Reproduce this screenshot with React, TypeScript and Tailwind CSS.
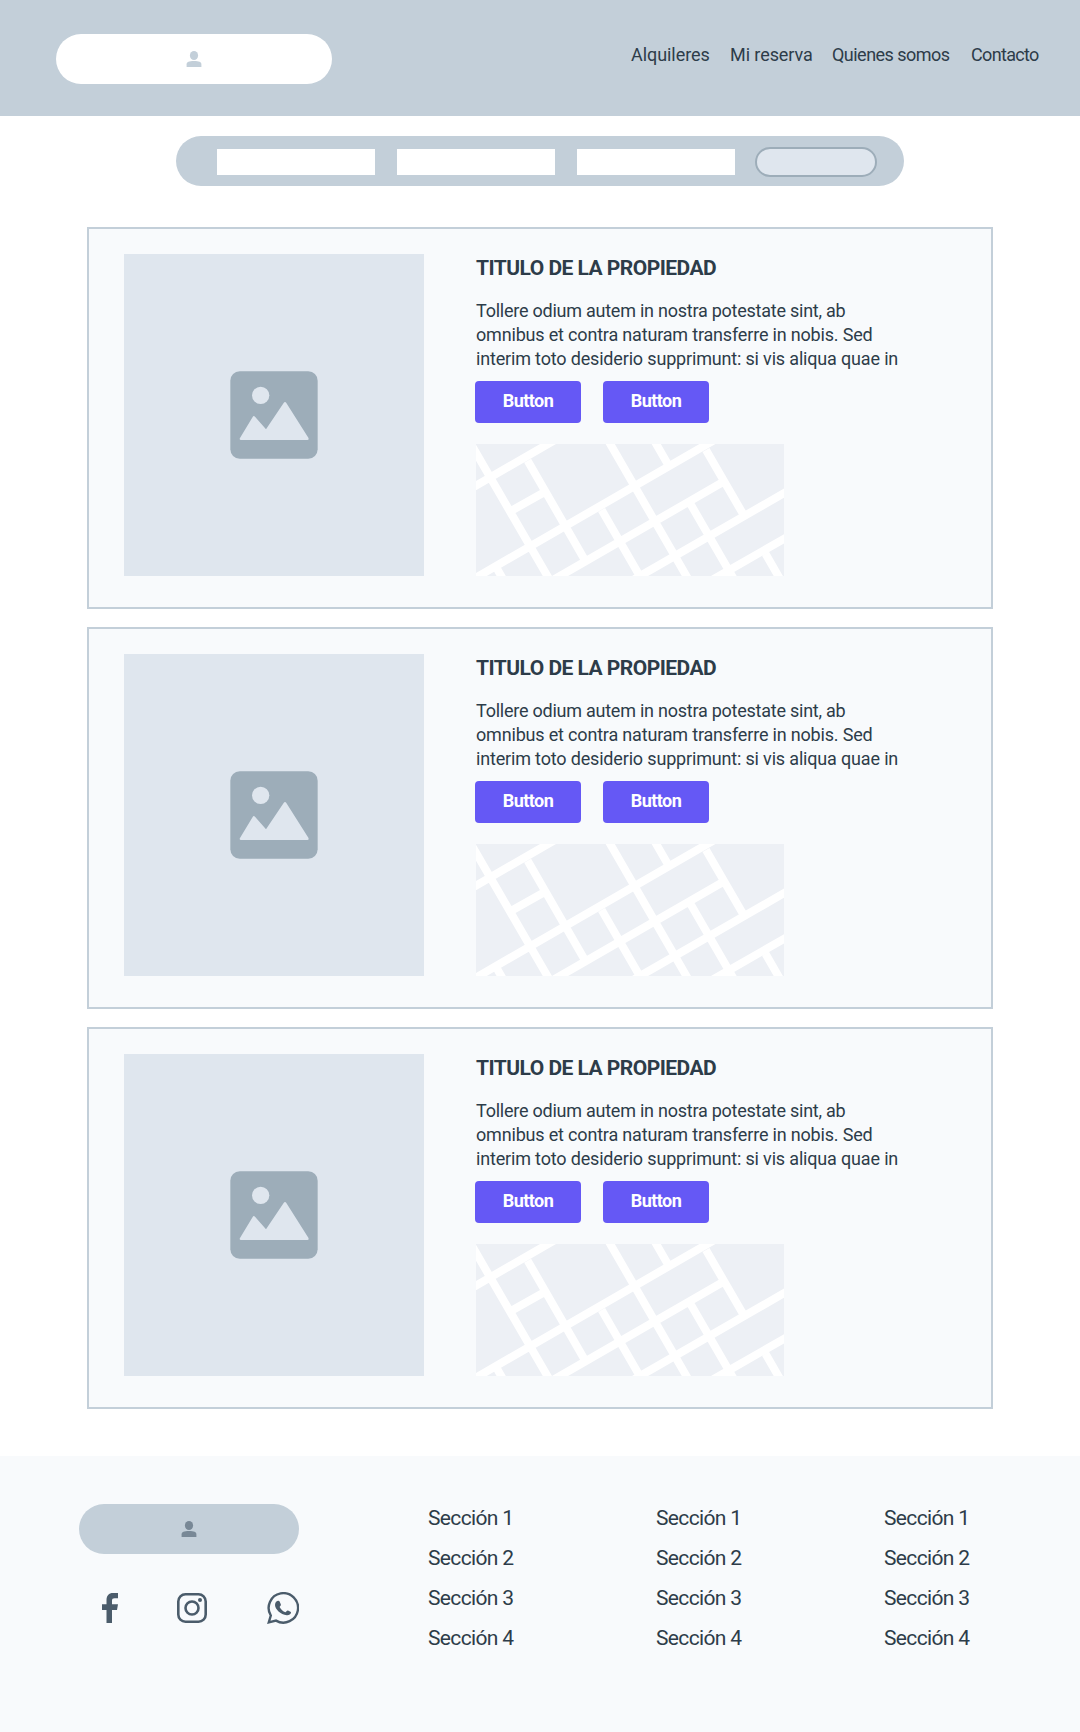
const NAV = [
  { label: 'Alquileres', style: 'w-[99px] tracking-[-0.06px]' },
  { label: 'Mi reserva', style: 'w-[102px] tracking-[-0.08px]' },
  { label: 'Quienes somos', style: 'w-[139px] tracking-[-0.52px]' },
  { label: 'Contacto', style: 'w-[70px] tracking-[-0.66px]' },
];

const COLUMNS = ['first', 'second', 'third'];
const SECTIONS = ['Sección 1', 'Sección 2', 'Sección 3', 'Sección 4'];

function UserIcon() {
  return (
    <svg viewBox="0 0 16 16" className="h-4 w-4" fill="currentColor" aria-hidden="true">
      <ellipse cx="8" cy="4.5" rx="4.1" ry="4.5" />
      <path d="M.6 16v-2.6C.6 11 3 10 8 10s7.4 1 7.4 3.4V16z" />
    </svg>
  );
}

function ImageIcon() {
  return (
    <svg viewBox="0 0 264 264" className="h-[88px] w-[88px]" aria-hidden="true">
      <rect x="1" y="1" width="262" height="262" rx="28" fill="#9dadb9" />
      <g fill="#dfe6ee">
        <circle cx="92" cy="73" r="26" />
        <path d="M33 207q-6 0-3-6l38-63q3-5 7-1l33 38 53-79q4-6 8 0l66 104q3 7-3 7z" />
      </g>
    </svg>
  );
}

function StreetMap() {
  return (
    <svg viewBox="48 42 924 396" className="mt-[21px] ml-[1px] h-[132px] w-[308px] bg-[#edf0f5]" aria-hidden="true">
      <path
        fill="none"
        stroke="#fff"
        strokeWidth="24"
        d="M30 177 290 27M39 448 770 26M283 448 789 156M523 448 990 179M760 448 990 316M158 240 250 188
           M24 27 268 448M203 92 371 384M442 27 685 448M580 27 621 98M738 60 848 250M425 240 545 448
           M692 223 822 448M917 372 963 452M112 418 130 449"
      />
    </svg>
  );
}

function ActionButton() {
  return (
    <button className="flex h-[42px] w-[106px] items-center justify-center rounded bg-[#6558f5] pb-0.5 text-[18px] leading-6 font-bold tracking-[-0.53px] text-white">
      Button
    </button>
  );
}

function PropertyCard() {
  return (
    <article className="flex h-[382px] w-[906px] border-2 border-[#c3cfd9] bg-[#f8fafc] pt-[25px] pl-[35px]">
      <div className="flex h-[322px] w-[300px] shrink-0 items-center justify-center bg-[#dfe6ee]">
        <ImageIcon />
      </div>
      <div className="ml-[51px]">
        <h2 className="ml-[1px] text-[21px] leading-7 font-bold tracking-[-0.53px]">TITULO DE LA PROPIEDAD</h2>
        <p className="mt-[17px] ml-[1px] text-[18px] leading-6 whitespace-nowrap">
          <span className="block tracking-[-0.24px]">Tollere odium autem in nostra potestate sint, ab</span>
          <span className="block tracking-[-0.18px]">omnibus et contra naturam transferre in nobis. Sed</span>
          <span className="block tracking-[-0.17px]">interim toto desiderio supprimunt: si vis aliqua quae in</span>
        </p>
        <div className="mt-[10px] flex gap-[22px]">
          <ActionButton />
          <ActionButton />
        </div>
        <StreetMap />
      </div>
    </article>
  );
}

function SocialLinks() {
  return (
    <div className="mt-[38px] flex h-8 items-center pl-[23px] text-[#4b5c6b]">
      <svg viewBox="0 0 16 30" className="h-[30px] w-4 shrink-0" fill="currentColor" aria-label="Facebook">
        <path d="M4.5 30V17H0v-5.800h4.500V7.500C4.500 2.500 6.800 0 11 0h5v5.200h-3.400c-2 0-2.600.8-2.600 2.500v3.500h6L15 17h-5v13z" />
      </svg>
      <svg viewBox="0 0 30 30" className="ml-[59px] h-[30px] w-[30px] shrink-0" fill="none" stroke="currentColor" strokeWidth="2.6" aria-label="Instagram">
        <rect x="1.300" y="1.300" width="27.400" height="27.400" rx="7.200" />
        <circle cx="15" cy="15" r="6.500" />
        <circle cx="23" cy="7" r="2" fill="currentColor" stroke="none" />
      </svg>
      <svg viewBox="0 0 32 32" className="ml-[60px] h-8 w-8 shrink-0" fill="none" stroke="currentColor" strokeWidth="2.4" aria-label="WhatsApp">
        <path d="M1.800 30.300 3.800 23.500A14.700 14.700 0 1 1 9 28.600z" />
        <path
          fill="currentColor"
          stroke="none"
          d="M8 13c0-2.400 1.400-4.100 3-4.300.9-.1 1.300.2 1.600.9l1.200 2.700c.4.9-.6 1.900-1.200 2.600 1.500 2.700 3.200 4.200 5.900 5.400.8-.7 1.500-2.200 2.500-1.800l2.500 1.200c.5.300.6.5.5 1.100-.3 1.700-2.300 2.700-4.200 2.500C13.500 22.600 8 17 8 13z"
        />
      </svg>
    </div>
  );
}

export default function App() {
  return (
    <div className="flex h-[1732px] w-[1080px] flex-col bg-white font-[Roboto,sans-serif] text-[#2d3c49]">
      <header className="flex h-[116px] items-start justify-between bg-[#c3cfd9] pl-14">
        <div className="mt-[34px] flex h-[50px] w-[276px] items-center justify-center rounded-[25px] bg-white text-[#c3cfd9]">
          <UserIcon />
        </div>
        <nav className="mt-[43px] mr-[39px] flex text-[18px] leading-6 whitespace-nowrap">
          {NAV.map((item) => (
            <a key={item.label} className={item.style}>{item.label}</a>
          ))}
        </nav>
      </header>

      <form className="mt-5 ml-[176px] flex h-[50px] w-[728px] items-start rounded-[25px] bg-[#c3cfd9] pl-[41px]">
        <div className="mt-[13px] flex gap-[22px]">
          <div className="h-[26px] w-[158px] bg-white" />
          <div className="h-[26px] w-[158px] bg-white" />
          <div className="h-[26px] w-[158px] bg-white" />
        </div>
        <div className="mt-[11px] ml-5 h-[30px] w-[122px] rounded-[15px] border-2 border-[#9dadb9] bg-[#dfe6ee]" />
      </form>

      <main className="mt-[41px] ml-[87px] flex flex-col gap-[18px]">
        <PropertyCard />
        <PropertyCard />
        <PropertyCard />
      </main>

      <footer className="mt-[47px] flex flex-1 bg-[#f8fafc] pl-[79px]">
        <div className="mt-12 w-[220px] shrink-0">
          <div className="flex h-[50px] items-center justify-center rounded-[25px] bg-[#c3cfd9] text-[#788896]">
            <UserIcon />
          </div>
          <SocialLinks />
        </div>
        <div className="mt-[42px] ml-[129px] flex shrink-0">
          {COLUMNS.map((column) => (
            <ul key={column} className="w-[228px] text-[21px] leading-10 tracking-[-0.65px] last:w-[110px]">
              {SECTIONS.map((section) => (
                <li key={section}>{section}</li>
              ))}
            </ul>
          ))}
        </div>
      </footer>
    </div>
  );
}
